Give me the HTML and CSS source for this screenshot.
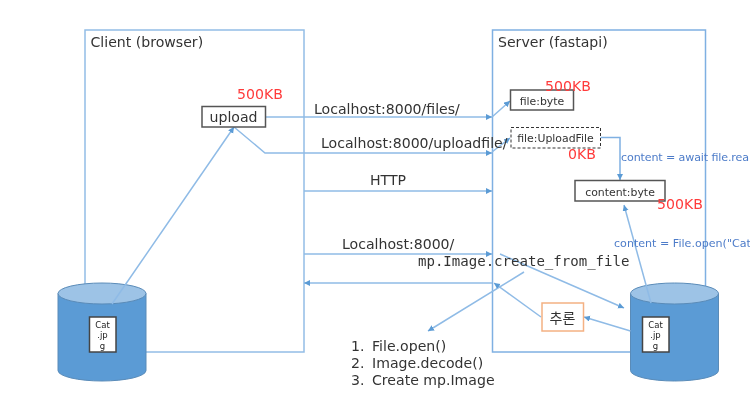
FILE: index.html
```html
<!DOCTYPE html>
<html lang="en">
<head>
<meta charset="utf-8">
<title>FastAPI upload diagram</title>
<link rel="stylesheet" href="styles.css">
</head>
<body>
<svg class="diagram" width="750" height="413" viewBox="0 0 750 413">
  <defs>
    <marker id="arrow" markerUnits="userSpaceOnUse" markerWidth="7" markerHeight="7" refX="6" refY="3" orient="auto">
      <path class="arrow-head" d="M0 0L6 3L0 6Z"/>
    </marker>
    <g id="drum">
      <path class="drum-body" d="M0 10.5V87.500A44 10.500 0 0 0 88 87.500V10.500Z"/>
      <ellipse class="drum-top" cx="44" cy="10.500" rx="44" ry="10.500"/>
    </g>
  </defs>

  <rect class="frame client" x="85" y="30" width="219" height="322"/>
  <rect class="frame server" x="492.500" y="30" width="213" height="322"/>

  <use href="#drum" x="58" y="283"/>
  <use href="#drum" x="630.500" y="283"/>

  <g class="wire">
    <path marker-end="url(#arrow)" d="M112 304L234 127"/>
    <path marker-end="url(#arrow)" d="M265 117H492"/>
    <path marker-end="url(#arrow)" d="M492 117L510 101"/>
    <path marker-end="url(#arrow)" d="M234 127L265 153H492"/>
    <path marker-end="url(#arrow)" d="M492 152L510 138"/>
    <path marker-end="url(#arrow)" d="M304 191H492"/>
    <path marker-end="url(#arrow)" d="M304 254H492"/>
    <path marker-end="url(#arrow)" d="M500 254L624 308"/>
    <path marker-end="url(#arrow)" d="M524 272L428 331"/>
    <path marker-end="url(#arrow)" d="M492 283H304"/>
    <path marker-end="url(#arrow)" d="M541 317L494 283"/>
    <path marker-end="url(#arrow)" d="M630.500 331L584 317"/>
    <path marker-end="url(#arrow)" d="M651 303L624 205"/>
    <path class="wire-dark" marker-end="url(#arrow)" d="M600 137.500H620V180"/>
  </g>

  <rect class="box" x="202" y="106.500" width="63.500" height="20.500"/>
  <rect class="box" x="510.500" y="90" width="63" height="20"/>
  <rect class="box dashed" x="511" y="127.500" width="89.500" height="20.500"/>
  <rect class="box" x="575" y="180.500" width="90" height="20.500"/>
  <rect class="box file" x="89.500" y="317" width="26.500" height="35"/>
  <rect class="box file" x="642.500" y="317" width="26.500" height="35"/>
  <rect class="infer" x="542" y="303" width="41.500" height="28"/>

  <text class="label big" x="90.500" y="47">Client (browser)</text>
  <text class="label big" x="498" y="47">Server (fastapi)</text>
  <text class="label big mid" x="233.500" y="122">upload</text>

  <text class="size" x="237" y="99">500KB</text>
  <text class="size" x="545" y="91">500KB</text>
  <text class="size" x="568" y="159">0KB</text>
  <text class="size" x="657" y="209">500KB</text>

  <text class="label big" x="314" y="114">Localhost:8000/files/</text>
  <text class="label big" x="321" y="148">Localhost:8000/uploadfile/</text>
  <text class="label big" x="370" y="185">HTTP</text>
  <text class="label big" x="342" y="249">Localhost:8000/</text>
  <text class="code" x="418" y="266">mp.Image.create_from_file</text>

  <text class="label small mid" x="542" y="105">file:byte</text>
  <text class="label small mid" x="555.500" y="142">file:UploadFile</text>
  <text class="label small mid" x="620" y="196">content:byte</text>

  <text class="note" x="621" y="161" textLength="128" lengthAdjust="spacing">content = await file.rea</text>
  <text class="note" x="614" y="247">content = File.open("Cat</text>

  <text class="tiny mid" x="102.500" y="328">Cat</text>
  <text class="tiny mid" x="102.500" y="338">.jp</text>
  <text class="tiny mid" x="102.500" y="349">g</text>
  <text class="tiny mid" x="655.500" y="328">Cat</text>
  <text class="tiny mid" x="655.500" y="338">.jp</text>
  <text class="tiny mid" x="655.500" y="349">g</text>

  <text class="ko mid" x="562.500" y="323">추론</text>

  <text class="label list" x="351" y="351">1.</text>
  <text class="label list" x="372" y="351">File.open()</text>
  <text class="label list" x="351" y="368">2.</text>
  <text class="label list" x="372" y="368">Image.decode()</text>
  <text class="label list" x="351" y="385">3.</text>
  <text class="label list" x="372" y="385">Create mp.Image</text>
</svg>
</body>
</html>
```

FILE: styles.css
```css
html, body {
  margin: 0;
  padding: 0;
  background: #fff;
}

.diagram {
  display: block;
  filter: blur(0.45px);
}

.frame {
  fill: none;
  stroke-width: 1.5;
}

.client {
  stroke: #93bde6;
}

.server {
  stroke: #7fb0e2;
}

.drum-body {
  fill: #5b9bd5;
  stroke: #5a8bb8;
}

.drum-top {
  fill: #9dc3e6;
  stroke: #5a8bb8;
}

.wire path {
  fill: none;
  stroke: #8fbbe6;
  stroke-width: 1.5;
}

.wire .wire-dark {
  stroke: #7fb0e2;
}

.wire .arrow-head,
.arrow-head {
  fill: #5b9bd5;
  stroke: none;
}

.box {
  fill: #fff;
  stroke: #555;
  stroke-width: 1.5;
}

.dashed {
  stroke: #333;
  stroke-width: 1;
  stroke-dasharray: 3 2;
}

.file {
  stroke: #444;
}

.infer {
  fill: #fff;
  stroke: #f4b183;
  stroke-width: 1.5;
}

text {
  font-family: "DejaVu Sans", sans-serif;
  fill: #333;
}

.mid {
  text-anchor: middle;
}

.big {
  font-size: 14.100px;
}

.small {
  font-size: 10.900px;
}

.list {
  font-size: 14.100px;
}

.size {
  font-size: 14.100px;
  fill: #ff3b3b;
}

.code {
  font-family: "DejaVu Sans Mono", monospace;
  font-size: 14.050px;
}

.note {
  font-size: 11.100px;
  fill: #4d7cc9;
}

.tiny {
  font-size: 8.500px;
  fill: #222;
}

.ko {
  font-family: "Noto Sans CJK KR", sans-serif;
  font-size: 14px;
}
```
